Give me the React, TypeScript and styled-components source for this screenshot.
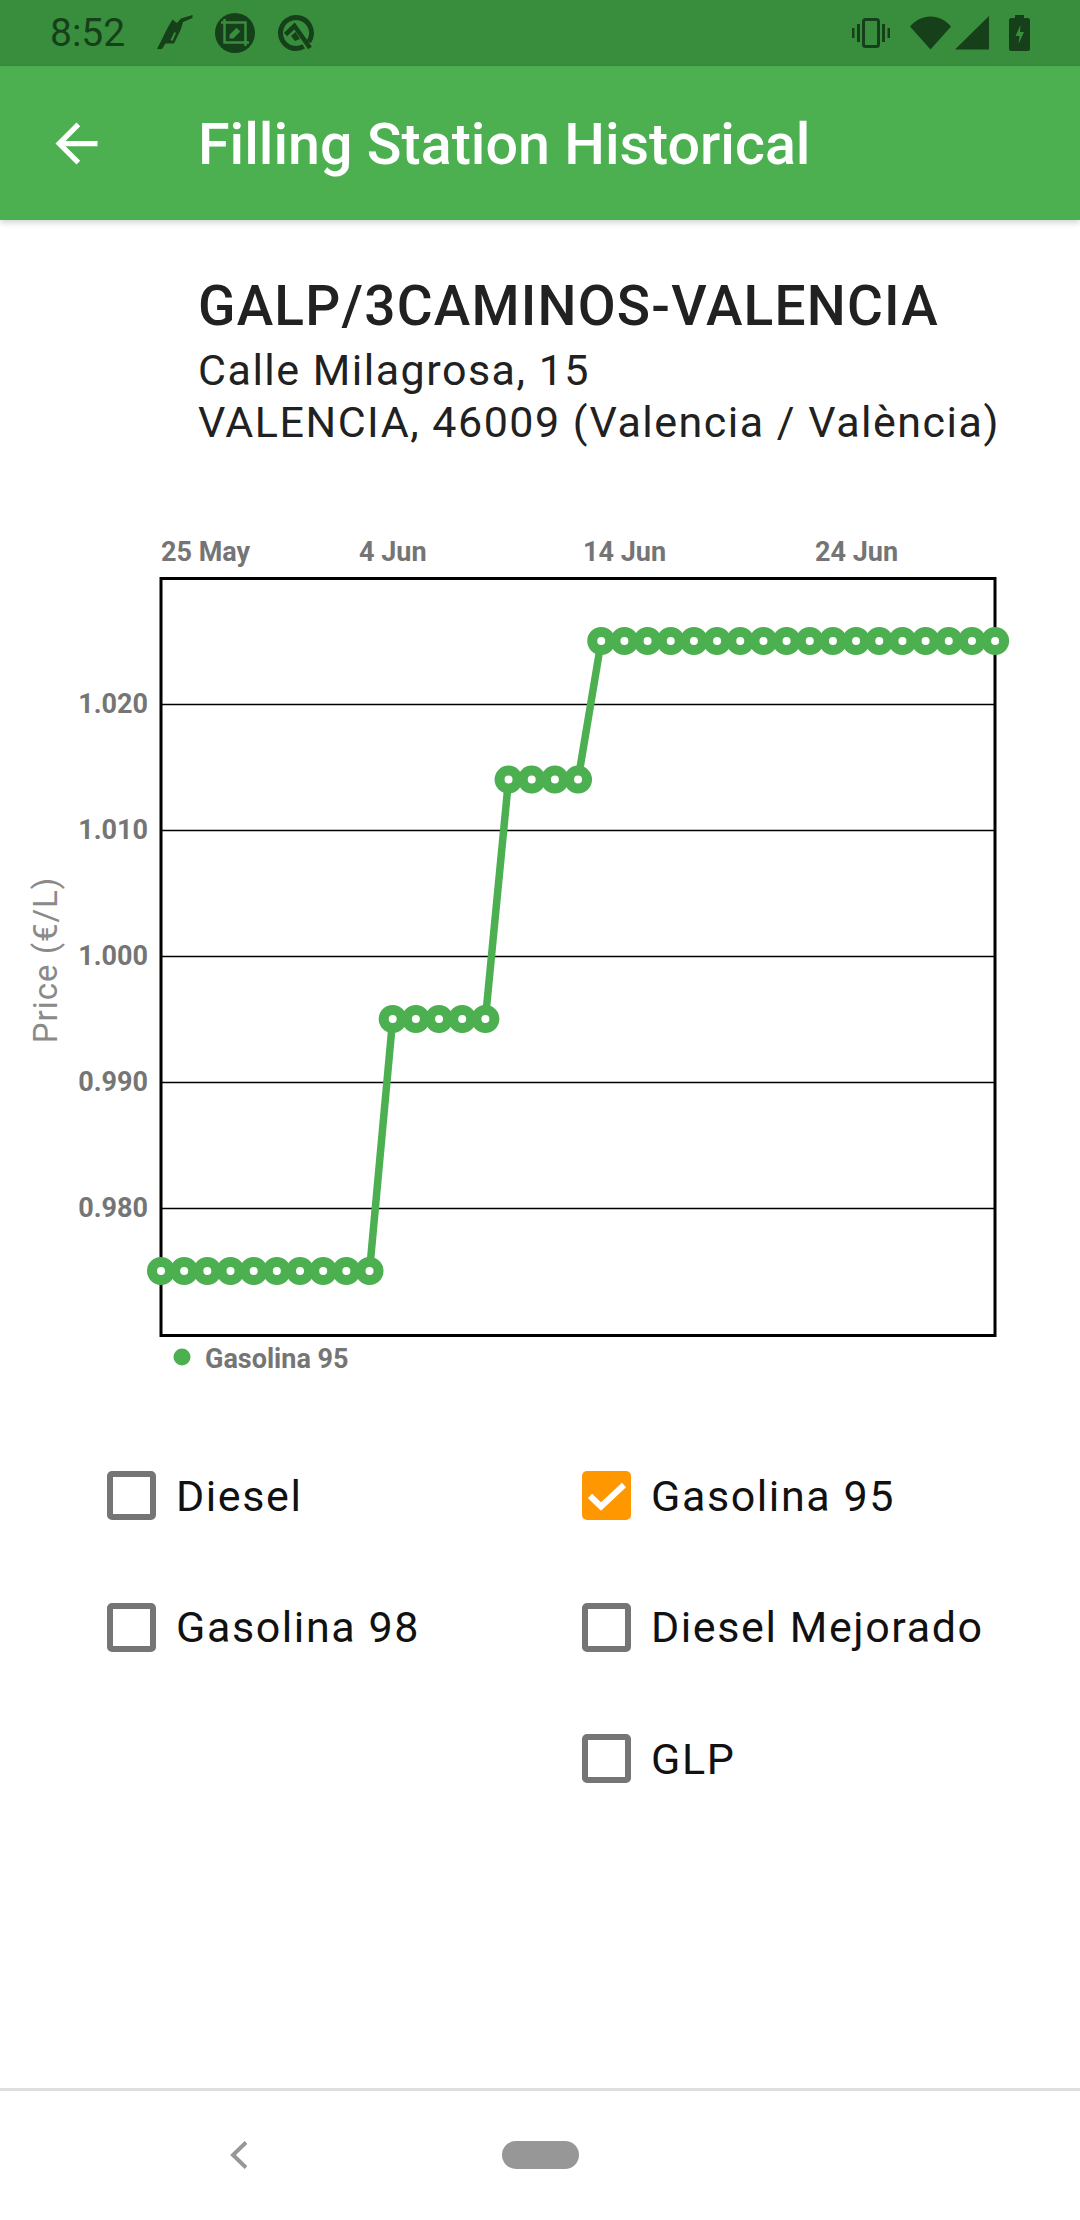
import { createGlobalStyle, styled } from "styled-components";

const GlobalStyle = createGlobalStyle`
	html, body {
		margin: 0;
		padding: 0;
		background: #fff;
	}
	body {
		font-family: Roboto, "Liberation Sans", sans-serif;
	}
`;

const Screen = styled.div`
	display: flex;
	flex-direction: column;
	width: 1080px;
	height: 2220px;
	overflow: hidden;
	background: #fff;
`;

const StatusBar = styled.div`
	display: flex;
	align-items: center;
	height: 66px;
	padding: 0 50px;
	box-sizing: border-box;
	background: #388e3c;
	color: #16401a;
`;

const StatusTime = styled.span`
	font-size: 39px;
	width: 107px;
`;

const StatusLeftIcons = styled.div`
	display: flex;
	align-items: center;
	flex: 1;
`;

const StatusRightIcons = styled.div`
	display: flex;
	align-items: center;
`;

const AppBar = styled.header`
	position: relative;
	display: flex;
	align-items: center;
	height: 154px;
	padding-left: 45px;
	box-sizing: border-box;
	background: #4caf50;
	box-shadow: 0 3px 6px rgba(0, 0, 0, 0.16);
`;

const AppBarTitle = styled.h1`
	margin: 0 0 0 90px;
	padding-top: 4px;
	color: #fff;
	font-size: 57.4px;
	font-weight: 500;
	line-height: 1;
`;

const Main = styled.main`
	flex: 1;
`;

const StationInfo = styled.section`
	padding: 48px 0 0 198px;
	color: #212121;
`;

const StationName = styled.h2`
	margin: 0;
	font-size: 55px;
	font-weight: 500;
	line-height: 76px;
	letter-spacing: 1.2px;
`;

const StationAddress = styled.p`
	margin: 0;
	font-size: 43px;
	line-height: 52px;
	letter-spacing: 1.5px;
`;

const ChartFigure = styled.figure`
	margin: 72px 0 0;
	height: 870px;
`;

const ChartSvg = styled.svg`
	display: block;
`;

const AxisText = styled.text`
	fill: #757575;
	font-family: Roboto, sans-serif;
	font-size: 27px;
	font-weight: 700;
`;

const AxisTitle = styled.text`
	fill: #8a8a8a;
	font-family: Roboto, sans-serif;
	font-size: 33px;
	letter-spacing: 1px;
`;

const FuelGrid = styled.div`
	display: grid;
	grid-template-columns: 475px 1fr;
	grid-auto-rows: 131.5px;
	margin-top: 40px;
	padding-left: 107px;
`;

const FuelOption = styled.label<{ $column: number }>`
	grid-column: ${(p) => p.$column};
	display: flex;
	align-items: center;
	gap: 20px;
	color: #111;
	font-size: 43px;
	letter-spacing: 1.6px;
`;

const FuelBox = styled.span<{ $checked?: boolean }>`
	display: flex;
	align-items: center;
	justify-content: center;
	width: 49px;
	height: 49px;
	box-sizing: border-box;
	border-radius: 5px;
	border: ${(p) => (p.$checked ? "0" : "6.5px solid #757575")};
	background: ${(p) => (p.$checked ? "#ff9800" : "transparent")};
`;

const NavBar = styled.nav`
	position: relative;
	display: flex;
	align-items: center;
	height: 132px;
	box-sizing: border-box;
	border-top: 3px solid #dedede;
	padding: 0 0 2px 230px;
`;

const NavPill = styled.span`
	width: 77px;
	height: 28px;
	margin-left: 255px;
	border-radius: 14px;
	background: #979797;
`;

const GREEN = "#4caf50";

// price per day, one value for each point of the series
const prices = [
	...Array(10).fill(0.975),
	...Array(5).fill(0.995),
	...Array(4).fill(1.014),
	...Array(18).fill(1.025),
] as number[];

const priceToY = (price: number) => 704 + (1.02 - price) * 12600;
const indexToX = (index: number) => 161 + index * 23.17;

const gridPrices = ["1.020", "1.010", "1.000", "0.990", "0.980"];
const dateTicks = [
	{ label: "25 May", x: 161 },
	{ label: "4 Jun", x: 359 },
	{ label: "14 Jun", x: 583 },
	{ label: "24 Jun", x: 815 },
];

const PriceChart = () => {
	const points = prices.map((price, i) => ({
		x: indexToX(i),
		y: priceToY(price),
	}));
	const linePoints = points.map((p) => `${p.x},${p.y}`).join(" ");

	return (
		<ChartSvg width={1080} height={870} viewBox="0 520 1080 870">
			{dateTicks.map((tick) => (
				<AxisText key={tick.label} x={tick.x} y={561}>
					{tick.label}
				</AxisText>
			))}
			{gridPrices.map((label) => (
				<g key={label}>
					<line
						x1={161}
						x2={995}
						y1={priceToY(Number(label)) + 0.5}
						y2={priceToY(Number(label)) + 0.5}
						stroke="#000"
						strokeWidth={1.5}
					/>
					<AxisText
						x={148}
						y={priceToY(Number(label)) + 8.5}
						textAnchor="end"
					>
						{label}
					</AxisText>
				</g>
			))}
			<rect
				x={161}
				y={578.5}
				width={834}
				height={757}
				fill="none"
				stroke="#000"
				strokeWidth={3}
			/>
			<AxisTitle
				x={0}
				y={0}
				textAnchor="middle"
				transform="translate(57 960) rotate(-90)"
			>
				Price (€/L)
			</AxisTitle>
			<polyline
				points={linePoints}
				fill="none"
				stroke={GREEN}
				strokeWidth={7.5}
			/>
			{points.map((p) => (
				<circle
					key={p.x}
					cx={p.x}
					cy={p.y}
					r={9}
					fill="#fff"
					stroke={GREEN}
					strokeWidth={10}
				/>
			))}
			<circle cx={182} cy={1357} r={8.5} fill={GREEN} />
			<AxisText x={205} y={1368}>
				Gasolina 95
			</AxisText>
		</ChartSvg>
	);
};

const NozzleIcon = () => (
	<svg width="38" height="36" viewBox="0 0 38 36" style={{ marginRight: 20 }}>
		<path
			fill="currentColor"
			fillRule="evenodd"
			d="M0 34H5l3.500-5.500 8.500 0L24 14l2-7 9.500-4V0L24 3.500 20 8l-4.500-3.500L11 12 7 20zM13.500 25l4-8 1.500 1-3.500 8z"
		/>
	</svg>
);

const CropBadgeIcon = () => (
	<svg width="40" height="40" viewBox="0 0 40 40" style={{ marginRight: 22 }}>
		<circle cx="20" cy="20" r="20" fill="currentColor" />
		<g fill="none" stroke="#388e3c" strokeWidth="2.500">
			<path d="M9.500 6v23.500H34" />
			<path d="M6 9.500h24.500V33" />
		</g>
		<path fill="#388e3c" d="M14.500 25.500v-3.800l7-7 3.800 3.800-7 7z" />
	</svg>
);

const QBetaIcon = () => (
	<svg width="38" height="38" viewBox="0 0 38 38">
		<circle
			cx="19"
			cy="19"
			r="15.500"
			fill="none"
			stroke="currentColor"
			strokeWidth="5"
			strokeDasharray="90 7.400"
			transform="rotate(60 19 19)"
		/>
		<path
			fill="none"
			stroke="currentColor"
			strokeWidth="4.500"
			d="M8.500 20.500L17.500 12 33 34"
		/>
		<path fill="currentColor" d="M14 22l4.500-4 4.500 7-5 2z" />
	</svg>
);

const VibrateIcon = () => (
	<svg width="38" height="30" viewBox="0 0 38 30" style={{ marginRight: 20 }}>
		<rect
			x="11.500"
			y="1.500"
			width="15"
			height="27"
			rx="2"
			fill="none"
			stroke="currentColor"
			strokeWidth="3"
		/>
		<path
			fill="currentColor"
			d="M0 10h2.500v10H0zM5 6h3v18H5zM30 6h3v18h-3zM35.500 10H38v10h-2.500z"
		/>
	</svg>
);

const WifiIcon = () => (
	<svg width="41" height="34" viewBox="0 0 41 34" style={{ marginRight: 4 }}>
		<path fill="currentColor" d="M0 10.500C11 -3 30 -3 41 10.500L20.500 33.500z" />
	</svg>
);

const SignalIcon = () => (
	<svg width="34" height="34" viewBox="0 0 34 34" style={{ marginRight: 20 }}>
		<path fill="currentColor" d="M0 33.500L34 0v33.500z" />
	</svg>
);

const BatteryIcon = () => (
	<svg width="21" height="36" viewBox="0 0 21 36">
		<path
			fill="currentColor"
			d="M6 0h9v3h4c1 0 2 1 2 2v29c0 1-1 2-2 2H2c-1 0-2-1-2-2V5c0-1 1-2 2-2h4z"
		/>
		<path fill="#388e3c" d="M11.500 10l-5 11h4l-1 8 5.500-12h-4z" />
	</svg>
);

const BackArrowIcon = () => (
	<svg width="63" height="63" viewBox="0 0 24 24">
		<path
			fill="#fff"
			d="M20 11H7.830l5.590-5.590L12 4l-8 8 8 8 1.410-1.410L7.830 13H20v-2z"
		/>
	</svg>
);

const CheckMark = () => (
	<svg width="38" height="30" viewBox="0 0 38 30">
		<path
			fill="none"
			stroke="#fff"
			strokeWidth="6"
			d="M2 15l11 10.500L36 4"
		/>
	</svg>
);

const NavBackIcon = () => (
	<svg width="17" height="28" viewBox="0 0 17 28">
		<path fill="none" stroke="#979797" strokeWidth="4" d="M16 1.500L3 14l13 12.500" />
	</svg>
);

const fuelOptions = [
	{ label: "Diesel", column: 1 },
	{ label: "Gasolina 95", column: 2, checked: true },
	{ label: "Gasolina 98", column: 1 },
	{ label: "Diesel Mejorado", column: 2 },
	{ label: "GLP", column: 2 },
];

export default function App() {
	return (
		<Screen>
			<GlobalStyle />
			<StatusBar>
				<StatusTime>8:52</StatusTime>
				<StatusLeftIcons>
					<NozzleIcon />
					<CropBadgeIcon />
					<QBetaIcon />
				</StatusLeftIcons>
				<StatusRightIcons>
					<VibrateIcon />
					<WifiIcon />
					<SignalIcon />
					<BatteryIcon />
				</StatusRightIcons>
			</StatusBar>
			<AppBar>
				<BackArrowIcon />
				<AppBarTitle>Filling Station Historical</AppBarTitle>
			</AppBar>
			<Main>
				<StationInfo>
					<StationName>GALP/3CAMINOS-VALENCIA</StationName>
					<StationAddress>
						Calle Milagrosa, 15
						<br />
						VALENCIA, 46009 (Valencia / València)
					</StationAddress>
				</StationInfo>
				<ChartFigure>
					<PriceChart />
				</ChartFigure>
				<FuelGrid>
					{fuelOptions.map((option) => (
						<FuelOption key={option.label} $column={option.column}>
							<FuelBox $checked={option.checked}>
								{option.checked && <CheckMark />}
							</FuelBox>
							{option.label}
						</FuelOption>
					))}
				</FuelGrid>
			</Main>
			<NavBar>
				<NavBackIcon />
				<NavPill />
			</NavBar>
		</Screen>
	);
}
